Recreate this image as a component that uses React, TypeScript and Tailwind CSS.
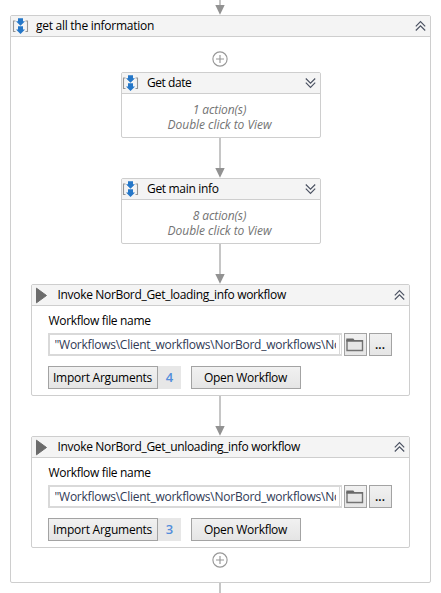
import type { ReactNode } from "react";

function SequenceIcon() {
  return (
    <svg width="17" height="16" viewBox="0 0 17 16" className="block shrink-0">
      <path d="M3.500 3H1.500V13.500H3.500M13.500 3H15.500V13.500H13.500" fill="none" stroke="#959595" strokeWidth="1.1" />
      <path d="M6 0.300h5v3h2L8.500 7.700 4 3.300h2zM6 8.300h5v3.300h2L8.500 16 4 11.600h2z" fill="#2577c8" />
    </svg>
  );
}

function PlayIcon() {
  return (
    <svg width="13" height="17" viewBox="0 0 13 17" className="block shrink-0">
      <path d="M1.500 1.200 11.500 8.500 1.500 15.800z" fill="#6b6b6b" stroke="#6b6b6b" strokeLinejoin="round" />
    </svg>
  );
}

function Chevrons({ up }: { up: boolean }) {
  return (
    <svg width="11" height="12" viewBox="0 0 11 12" className="block shrink-0" fill="none" stroke="#4b5262" strokeWidth="1.2">
      {up ? <path d="M.8 6.300 5.500 1.600l4.700 4.700M.8 10.500l4.700-4.700 4.700 4.700" /> : <path d="M.8 1.500l4.700 4.700 4.700-4.700M.8 5.700l4.700 4.700 4.700-4.700" />}
    </svg>
  );
}

function AddPoint() {
  return (
    <svg width="16" height="16" viewBox="0 0 16 16" className="block shrink-0" fill="none" stroke="#989898" strokeWidth="1.15">
      <circle cx="8" cy="8" r="7.100" />
      <path d="M8 4v8M4 8h8" />
    </svg>
  );
}

function Connector() {
  return (
    <svg width="10" height="40" viewBox="0 0 10 40" className="block shrink-0">
      <path d="M4 0h2v31H4z" fill="#c6c6c6" />
      <path d="M.3 30h9.400L5 39.700z" fill="#929292" />
    </svg>
  );
}

function Header({ icon, up, children }: { icon: ReactNode; up: boolean; children: ReactNode }) {
  return (
    <div className="flex h-[21px] shrink-0 items-center justify-between border-b border-[#cecece] bg-[#f4f4f4] pr-1">
      <div className="flex items-center">
        {icon}
        {children}
      </div>
      <Chevrons up={up} />
    </div>
  );
}

function CollapsedCard({ title, titleClass, count }: { title: string; titleClass: string; count: number }) {
  return (
    <section className="ml-[2px] flex h-[66px] w-[200px] shrink-0 flex-col overflow-hidden rounded-[2px] border border-[#cecece] bg-white">
      <Header icon={<SequenceIcon />} up={false}>
        <span className={titleClass}>{title}</span>
      </Header>
      <div className="pt-[8px] pr-[3px] text-center text-[12px] leading-[15px] text-[#737373] italic">
        <p className="tracking-[-0.1px]">{count} action(s)</p>
        <p className="tracking-[-0.04px]">Double click to View</p>
      </div>
    </section>
  );
}

const button = "flex h-[23px] shrink-0 items-center justify-center border border-[#a3a3a3] bg-linear-to-b from-[#f1f1f1] to-[#e5e5e5]";

function InvokeCard({ title, titleClass, count }: { title: string; titleClass: string; count: number }) {
  return (
    <section className="flex h-[112px] w-[379px] shrink-0 flex-col overflow-hidden rounded-[2px] border border-[#cecece] bg-white">
      <Header icon={<span className="ml-[3px]"><PlayIcon /></span>} up>
        <span className={titleClass}>{title}</span>
      </Header>
      <div className="pt-[7px] pl-4">
        <div className="h-[20px] pl-px leading-[16px] tracking-[-0.33px]">Workflow file name</div>
        <div className="flex">
          <div className="flex h-[23px] w-[294px] border-2 border-r border-[#d9d9d9] bg-white pl-[5px]">
            <div className="w-[281px] overflow-hidden leading-[19px] tracking-[-0.24px] whitespace-nowrap text-[#303a55]">
              "Workflows\Client_workflows\NorBord_workflows\NorBord
            </div>
            <div className="ml-auto mr-px w-px bg-[#d9d9d9]" />
          </div>
          <button className={button + " ml-[2px] w-[23px]"}>
            <svg width="18" height="14" viewBox="0 0 18 14">
              <path d="M1 2.800V12.500H16.500V2.800z" fill="#e6e6e6" stroke="#737373" strokeWidth="1.400" />
              <path d="M.3.5h7l1.500 2H17v1H.3z" fill="#686868" />
            </svg>
          </button>
          <button className={button + " ml-[2px] w-[23px] font-semibold"}>...</button>
        </div>
        <div className="mt-[10px] flex">
          <button className={button + " w-[110px] tracking-[-0.24px] whitespace-nowrap"}>Import Arguments</button>
          <span className="flex h-[23px] w-[23px] items-center justify-center bg-[#e7e7e7] pl-px text-[13px] font-semibold text-[#528ddb]">{count}</span>
          <button className={button + " ml-[10px] w-[110px] tracking-[-0.3px] whitespace-nowrap"}>Open Workflow</button>
        </div>
      </div>
    </section>
  );
}

export default function App() {
  return (
    <main className="flex h-[593px] w-[441px] flex-col overflow-hidden bg-white pl-[10px] font-['Open_Sans','Noto_Sans',sans-serif] text-[12px] text-black">
      <div className="flex h-[15px] w-[420px] shrink-0 items-end justify-center overflow-hidden">
        <Connector />
      </div>
      <section className="flex h-[568px] w-[421px] shrink-0 flex-col rounded-[2px] border border-[#cecece]">
        <Header icon={<span className="ml-px"><SequenceIcon /></span>} up>
          <span className="ml-[7px] tracking-[-0.27px]">get all the information</span>
        </Header>
        <div className="flex w-[418px] flex-col items-center pt-[14px]">
          <AddPoint />
          <div className="h-[5px]" />
          <CollapsedCard title="Get date" titleClass="ml-[8px] tracking-[-0.45px]" count={1} />
          <Connector />
          <CollapsedCard title="Get main info" titleClass="ml-[8px] tracking-[-0.32px]" count={8} />
          <Connector />
          <InvokeCard title="Invoke NorBord_Get_loading_info workflow" titleClass="ml-[10px] tracking-[-0.32px]" count={4} />
          <Connector />
          <InvokeCard title="Invoke NorBord_Get_unloading_info workflow" titleClass="ml-[10px] tracking-[-0.32px]" count={3} />
          <div className="h-[4px]" />
          <AddPoint />
        </div>
      </section>
      <div className="ml-[209px] h-[10px] w-[2px] shrink-0 bg-[#c6c6c6]" />
    </main>
  );
}
